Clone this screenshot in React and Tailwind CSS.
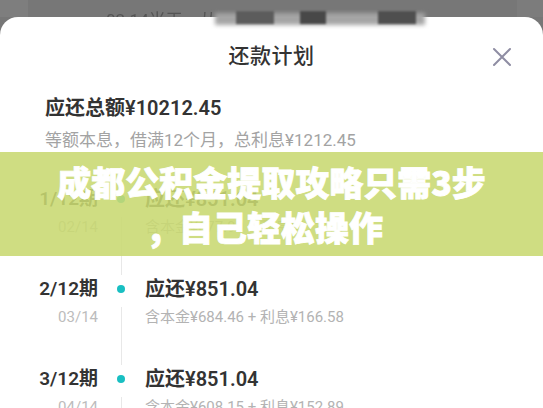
const rows = [
  { term: '1/12期', date: '02/14', amount: '应还¥851.04', detail: '含本金¥677.90 + 利息¥173.14' },
  { term: '2/12期', date: '03/14', amount: '应还¥851.04', detail: '含本金¥684.46 + 利息¥166.58' },
  { term: '3/12期', date: '04/14', amount: '应还¥851.04', detail: '含本金¥608.15 + 利息¥152.89' },
];

function CloseIcon() {
  return (
    <svg width="20" height="20" viewBox="0 0 20 20" fill="none" stroke="#8f8da3" strokeWidth="2" strokeLinecap="round">
      <path d="M2 2L18 18M18 2L2 18" />
    </svg>
  );
}

export default function App() {
  return (
    <div className="relative w-[543px] h-[408px] overflow-hidden bg-[#777777] font-['Roboto','Noto_Sans_CJK_SC',sans-serif]">
      {/* backdrop strip behind the sheet */}
      <div className="relative h-[17px] flex overflow-hidden">
        <div className="w-[28px] bg-[#7e7e7e]" />
        <div className="flex-1 pl-[78px] pt-[9px] text-[17px] leading-[22px] text-[#555555] whitespace-nowrap blur-[0.6px]">02.14当天　从</div>
        <div className="w-[26px] bg-[#7c7c7c]" />
      </div>

      {/* sheet */}
      <div className="bg-white rounded-t-[18px] h-[400px]">
        <div className="relative h-[77px] flex items-center justify-center pt-[2px]">
          <span className="text-[21px] font-medium text-[#333333] tracking-[0.5px]">还款计划</span>
          <div className="absolute right-[31px] top-[30px]">
            <CloseIcon />
          </div>
        </div>

        <div className="pl-[45px]">
          <div className="text-[20px] leading-[28px] font-semibold text-[#333333]">应还总额¥10212.45</div>
          <div className="mt-[6px] text-[17px] leading-[24px] text-[#a3a3a3]">等额本息，借满12个月，总利息¥1212.45</div>
        </div>

        <div className="mt-[33px]">
          {rows.map((r) => (
            <div key={r.term} className="flex h-[90px]">
              <div className="w-[98px] text-right">
                <div className="text-[19px] leading-[28px] font-semibold text-[#333333]">{r.term}</div>
                <div className="mt-[3px] text-[15px] leading-[22px] text-[#bcbcbc]">{r.date}</div>
              </div>
              <div className="w-[46px] flex flex-col items-center">
                <div className="h-[28px] flex items-center">
                  <div className="w-[8px] h-[8px] rounded-full bg-[#19bfc2]" />
                </div>
                <div className="mt-[4px] w-px h-[58px] bg-[#e8e8e8]" />
              </div>
              <div className="pl-[1px]">
                <div className="text-[20px] leading-[28px] font-semibold text-[#333333]">{r.amount}</div>
                <div className="mt-[3px] text-[15px] leading-[22px] text-[#b3b3b3]">{r.detail}</div>
              </div>
            </div>
          ))}
        </div>
      </div>

      {/* blurred blocks peeking over the sheet edge */}
      <div className="absolute left-[215px] top-[13px] w-[210px] h-[12px] bg-[#a5a5a5] blur-[2px]" />
      <div className="absolute left-[236px] top-[11px] w-[38px] h-[13px] bg-[#5c5c5c] blur-[1px]" />
      <div className="absolute left-[300px] top-[11px] w-[26px] h-[13px] bg-[#484848] blur-[1px]" />
      <div className="absolute left-[378px] top-[11px] w-[38px] h-[13px] bg-[#4f4f4f] blur-[1px]" />

      {/* overlay banner */}
      <div className="absolute left-0 right-0 top-[152px] h-[104px] bg-[rgba(200,216,113,0.88)] flex flex-col items-center justify-center font-['Noto_Sans_CJK_SC',sans-serif] text-white font-black text-[34px] leading-[45px] [-webkit-text-stroke:0.8px_#ffffff]">
        <div>成都公积金提取攻略只需3步</div>
        <div className="-ml-[10px] whitespace-pre">{',\u2002自己轻松操作'}</div>
      </div>
    </div>
  );
}
